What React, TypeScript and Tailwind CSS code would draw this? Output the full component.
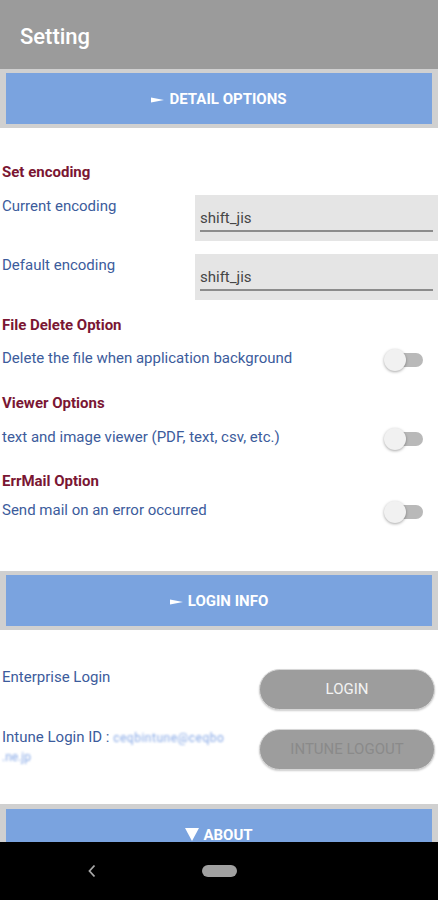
import React from "react";

const font = { fontFamily: "Roboto, 'Noto Sans', sans-serif" };

function Pointer() {
  return (
    <svg className="mr-[5px]" width="13" height="8" viewBox="0 0 13 8">
      <polygon points="0,1.5 13,4 0,6.5" fill="#ffffff" />
    </svg>
  );
}

function Band({ children }: { children: React.ReactNode }) {
  return (
    <div className="bg-[#d0d0d0] px-[6px] py-[4px]">
      <div className="flex h-[51px] items-center justify-center bg-[#7aa3df] pt-[2px] text-[15px] font-bold text-white">
        {children}
      </div>
    </div>
  );
}

function Toggle() {
  return (
    <div className="relative h-[24px] w-[40px] shrink-0">
      <div className="absolute left-[13px] top-[5px] h-[14px] w-[26px] rounded-full bg-[#b9b9b9]" />
      <div className="absolute left-0 top-[1px] h-[22px] w-[22px] rounded-full bg-[#f1f1f1] shadow-[0_1px_3px_rgba(0,0,0,0.35)]" />
    </div>
  );
}

function Heading({ children, className = "" }: { children: React.ReactNode; className?: string }) {
  return <div className={`pl-[2px] text-[15px] font-bold leading-[20px] text-[#7a1633] ${className}`}>{children}</div>;
}

function SwitchRow({ label, className = "" }: { label: string; className?: string }) {
  return (
    <div className={`flex items-start justify-between pl-[2px] pr-[14px] ${className}`}>
      <span className="text-[15px] leading-[20px] text-[#3c5c9c]">{label}</span>
      <Toggle />
    </div>
  );
}

function EncodingRow({ label, className = "" }: { label: string; className?: string }) {
  return (
    <div className={`flex items-start ${className}`}>
      <span className="w-[195px] pl-[2px] pt-[1px] text-[15px] leading-[20px] text-[#3c5c9c]">{label}</span>
      <div className="h-[46px] flex-1 bg-[#e5e5e5] px-[5px] pt-[13px]">
        <div className="text-[15px] leading-[20px] text-[#454545]">shift_jis</div>
        <div className="mt-[2px] h-[2px] bg-[#8c8c8c]" />
      </div>
    </div>
  );
}

export default function App() {
  return (
    <div className="flex h-[900px] w-[438px] flex-col overflow-hidden bg-white" style={font}>
      <div className="flex-1 overflow-hidden">
        <div className="flex h-[69px] items-center bg-[#9b9b9b] px-5 pt-[3px]">
          <span className="text-[22px] font-medium text-white">Setting</span>
        </div>
        <Band>
          <Pointer />DETAIL OPTIONS
        </Band>

        <Heading className="mt-[34px]">Set encoding</Heading>
        <EncodingRow label="Current encoding" className="mt-[13px]" />
        <EncodingRow label="Default encoding" className="mt-[13px]" />

        <Heading className="mt-[15px]">File Delete Option</Heading>
        <SwitchRow label="Delete the file when application background" className="mt-[13px]" />
        <Heading className="mt-[21px]">Viewer Options</Heading>
        <SwitchRow label="text and image viewer (PDF, text, csv, etc.)" className="mt-[14px]" />
        <Heading className="mt-[20px]">ErrMail Option</Heading>
        <SwitchRow label="Send mail on an error occurred" className="mt-[9px]" />

        <div className="mt-[47px]">
          <Band>
            <Pointer />LOGIN INFO
          </Band>
        </div>

        <div className="mt-[39px] flex items-start justify-between pr-[3px]">
          <span className="-mt-[2px] pl-[2px] text-[15px] leading-[20px] text-[#3c5c9c]">Enterprise Login</span>
          <div className="flex h-[41px] w-[176px] items-center justify-center rounded-full border border-[#d6d6d6] bg-[#9d9d9d] text-[15px] text-[#f3f3f3] shadow-[0_1px_2px_rgba(0,0,0,0.2)]">
            LOGIN
          </div>
        </div>
        <div className="mt-[19px] flex items-start justify-between pr-[3px]">
          <div className="-mt-[1px] w-[250px] pl-[2px] text-[15px] leading-[19px] text-[#3c5c9c]">
            <div>
              Intune Login ID :{" "}
              <span className="text-[12px] tracking-[0.5px] text-[#86a8e6] blur-[0.8px]">ceqbintune@ceqbo</span>
            </div>
            <div className="text-[12px] text-[#86a8e6] blur-[0.8px]">.ne.jp</div>
          </div>
          <div className="flex h-[41px] w-[176px] items-center justify-center rounded-full border border-[#d6d6d6] bg-[#9d9d9d] text-[15px] text-[#8a8a8a] shadow-[0_1px_2px_rgba(0,0,0,0.2)]">
            INTUNE LOGOUT
          </div>
        </div>

        <div className="mt-[34px]">
          <div className="bg-[#d0d0d0] px-[6px] pt-[5px]">
            <div className="flex h-[51px] items-start justify-center bg-[#7aa3df] pt-[17px] text-[15px] font-bold leading-[18px] text-white">
              <svg className="mr-[4px] mt-[2px]" width="14" height="13" viewBox="0 0 14 13">
                <polygon points="0,0 14,0 7,13" fill="#ffffff" />
              </svg>
              ABOUT
            </div>
          </div>
        </div>
      </div>

      <div className="relative h-[58px] shrink-0 bg-black">
        <svg className="absolute left-[88px] top-[22px]" width="8" height="14" viewBox="0 0 8 14">
          <path d="M6.5 1.5 L1.5 7 L6.5 12.5" fill="none" stroke="#a8a8a8" strokeWidth="1.8" />
        </svg>
        <div className="absolute left-[202px] top-[23px] h-[12px] w-[35px] rounded-full bg-[#a0a0a0]" />
      </div>
    </div>
  );
}
